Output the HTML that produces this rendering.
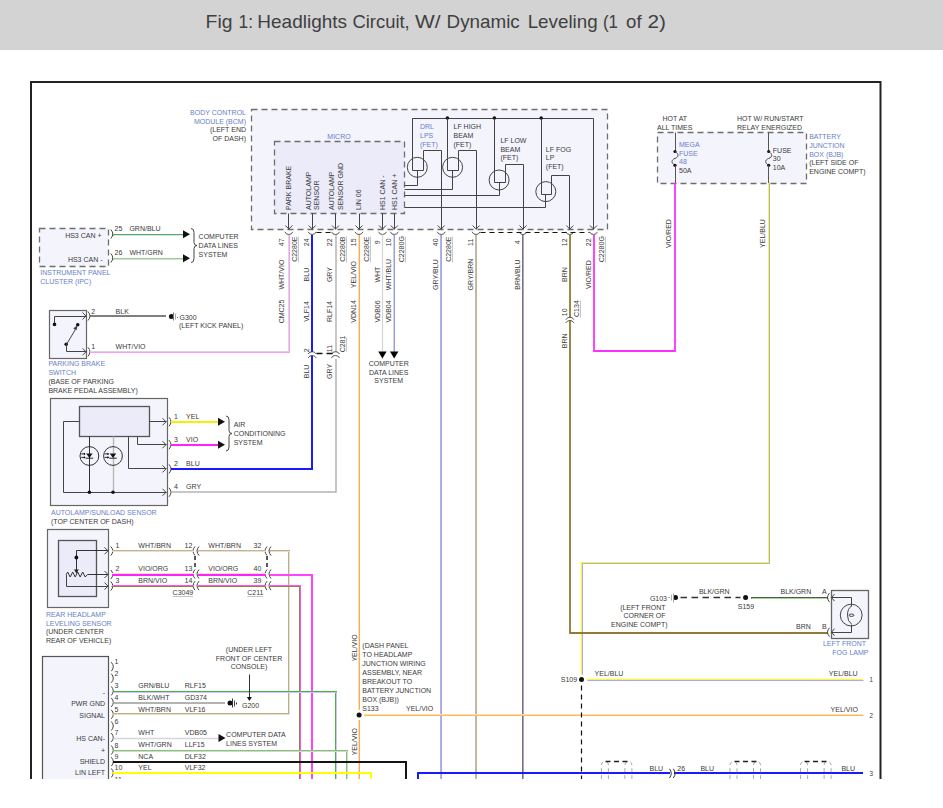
<!DOCTYPE html>
<html><head><meta charset="utf-8"><style>
html,body{margin:0;padding:0;background:#fff;}
svg{display:block;}
text{font-family:"Liberation Sans",sans-serif;}
</style></head><body>
<svg width="943" height="808" viewBox="0 0 943 808">
<rect x="0" y="0" width="943" height="808" fill="#ffffff"/>
<rect x="251.5" y="109.5" width="356.0" height="120.0" fill="#f4f4fd" stroke="#6e6e6e" stroke-width="1.3" stroke-dasharray="6,4"/>
<rect x="274.5" y="141.5" width="130.0" height="72.0" fill="#ebebf9" stroke="#6e6e6e" stroke-width="1.3" stroke-dasharray="6,4"/>
<text x="246" y="115.0" text-anchor="end" fill="#6a80c8" font-size="7">BODY CONTROL</text>
<text x="246" y="123.7" text-anchor="end" fill="#6a80c8" font-size="7">MODULE (BCM)</text>
<text x="246" y="132.4" text-anchor="end" fill="#3a3a3a" font-size="7">(LEFT END </text>
<text x="246" y="141.1" text-anchor="end" fill="#3a3a3a" font-size="7">OF DASH)</text>
<text x="339" y="138.5" text-anchor="middle" fill="#6a80c8" font-size="7">MICRO</text>
<text transform="translate(290.5,210) rotate(-90)" text-anchor="start" fill="#3a3a3a" font-size="7">PARK BRAKE</text>
<text transform="translate(310.5,210) rotate(-90)" text-anchor="start" fill="#3a3a3a" font-size="7">AUTOLAMP</text>
<text transform="translate(318.5,210) rotate(-90)" text-anchor="start" fill="#3a3a3a" font-size="7">SENSOR</text>
<text transform="translate(333.5,210) rotate(-90)" text-anchor="start" fill="#3a3a3a" font-size="7">AUTOLAMP</text>
<text transform="translate(342.5,210) rotate(-90)" text-anchor="start" fill="#3a3a3a" font-size="7">SENSOR GND</text>
<text transform="translate(361,210) rotate(-90)" text-anchor="start" fill="#3a3a3a" font-size="7">LIN 06</text>
<text transform="translate(385,210) rotate(-90)" text-anchor="start" fill="#3a3a3a" font-size="7">HS1 CAN -</text>
<text transform="translate(397,210) rotate(-90)" text-anchor="start" fill="#3a3a3a" font-size="7">HS1 CAN +</text>
<line x1="288.5" y1="213.5" x2="288.5" y2="229.5" stroke="#444" stroke-width="1"/>
<path d="M285.3,225.5 L288.8,229 L292.3,225.5" fill="none" stroke="#444" stroke-width="1"/>
<line x1="312.5" y1="213.5" x2="312.5" y2="229.5" stroke="#444" stroke-width="1"/>
<path d="M308.7,225.5 L312.2,229 L315.7,225.5" fill="none" stroke="#444" stroke-width="1"/>
<line x1="335.5" y1="213.5" x2="335.5" y2="229.5" stroke="#444" stroke-width="1"/>
<path d="M332.0,225.5 L335.5,229 L339.0,225.5" fill="none" stroke="#444" stroke-width="1"/>
<line x1="359.5" y1="213.5" x2="359.5" y2="229.5" stroke="#444" stroke-width="1"/>
<path d="M355.5,225.5 L359,229 L362.5,225.5" fill="none" stroke="#444" stroke-width="1"/>
<line x1="382.5" y1="213.5" x2="382.5" y2="229.5" stroke="#444" stroke-width="1"/>
<path d="M379.0,225.5 L382.5,229 L386.0,225.5" fill="none" stroke="#444" stroke-width="1"/>
<line x1="394.5" y1="213.5" x2="394.5" y2="229.5" stroke="#444" stroke-width="1"/>
<path d="M390.8,225.5 L394.3,229 L397.8,225.5" fill="none" stroke="#444" stroke-width="1"/>
<polyline points="412.5,167.5 412.5,118.5 593.5,118.5 593.5,229.5" fill="none" stroke="#444" stroke-width="1"/>
<path d="M590.0,225.5 L593.5,229 L597.0,225.5" fill="none" stroke="#444" stroke-width="1"/>
<circle cx="447.4" cy="118" r="1.8" fill="#111"/>
<circle cx="494.4" cy="118" r="1.8" fill="#111"/>
<circle cx="541.2" cy="118" r="1.8" fill="#111"/>
<circle cx="417.3" cy="167.3" r="10" fill="none" stroke="#444" stroke-width="1"/>
<line x1="412.5" y1="118.5" x2="412.5" y2="170.5" stroke="#444" stroke-width="1"/>
<line x1="412.5" y1="170.5" x2="423.5" y2="170.5" stroke="#444" stroke-width="1"/>
<polyline points="423.5,170.5 423.5,150.5 441.5,150.5 441.5,229.5" fill="none" stroke="#444" stroke-width="1"/>
<path d="M437.7,225.5 L441.2,229 L444.7,225.5" fill="none" stroke="#444" stroke-width="1"/>
<polyline points="417.5,170.5 417.5,185.5 404.5,185.5" fill="none" stroke="#444" stroke-width="1"/>
<circle cx="452.6" cy="167.3" r="10" fill="none" stroke="#444" stroke-width="1"/>
<line x1="447.5" y1="118.5" x2="447.5" y2="170.5" stroke="#444" stroke-width="1"/>
<line x1="447.5" y1="170.5" x2="458.5" y2="170.5" stroke="#444" stroke-width="1"/>
<polyline points="458.5,170.5 458.5,150.5 476.5,150.5 476.5,229.5" fill="none" stroke="#444" stroke-width="1"/>
<path d="M472.6,225.5 L476.1,229 L479.6,225.5" fill="none" stroke="#444" stroke-width="1"/>
<polyline points="452.5,170.5 452.5,189.5 404.5,189.5" fill="none" stroke="#444" stroke-width="1"/>
<circle cx="499.1" cy="180" r="10" fill="none" stroke="#444" stroke-width="1"/>
<line x1="494.5" y1="118.5" x2="494.5" y2="182.5" stroke="#444" stroke-width="1"/>
<line x1="494.5" y1="182.5" x2="505.5" y2="182.5" stroke="#444" stroke-width="1"/>
<polyline points="505.5,182.5 505.5,164.5 523.5,164.5 523.5,229.5" fill="none" stroke="#444" stroke-width="1"/>
<path d="M519.5,225.5 L523,229 L526.5,225.5" fill="none" stroke="#444" stroke-width="1"/>
<polyline points="499.5,182.5 499.5,195.5 404.5,195.5" fill="none" stroke="#444" stroke-width="1"/>
<circle cx="545.8" cy="191.6" r="10" fill="none" stroke="#444" stroke-width="1"/>
<line x1="541.5" y1="118.5" x2="541.5" y2="194.5" stroke="#444" stroke-width="1"/>
<line x1="541.5" y1="194.5" x2="551.5" y2="194.5" stroke="#444" stroke-width="1"/>
<polyline points="551.5,194.5 551.5,175.5 569.5,175.5 569.5,229.5" fill="none" stroke="#444" stroke-width="1"/>
<path d="M566.3,225.5 L569.8,229 L573.3,225.5" fill="none" stroke="#444" stroke-width="1"/>
<polyline points="545.5,194.5 545.5,207.5 404.5,207.5" fill="none" stroke="#444" stroke-width="1"/>
<text x="420" y="128.8" fill="#6a80c8" font-size="7">DRL</text>
<text x="420" y="137.9" fill="#6a80c8" font-size="7">LPS</text>
<text x="420" y="147.0" fill="#6a80c8" font-size="7">(FET)</text>
<text x="453.5" y="128.8" fill="#3a3a3a" font-size="7">LF HIGH</text>
<text x="453.5" y="137.9" fill="#3a3a3a" font-size="7">BEAM</text>
<text x="453.5" y="147.0" fill="#3a3a3a" font-size="7">(FET)</text>
<text x="500.4" y="142.8" fill="#3a3a3a" font-size="7">LF LOW</text>
<text x="500.4" y="151.5" fill="#3a3a3a" font-size="7">BEAM</text>
<text x="500.4" y="160.20000000000002" fill="#3a3a3a" font-size="7">(FET)</text>
<text x="545.8" y="151.8" fill="#3a3a3a" font-size="7">LF FOG</text>
<text x="545.8" y="160.20000000000002" fill="#3a3a3a" font-size="7">LP</text>
<text x="545.8" y="168.60000000000002" fill="#3a3a3a" font-size="7">(FET)</text>
<path d="M284.8,231.8 A4.3,4.3 0 0 0 292.8,231.8" fill="none" stroke="#555" stroke-width="1"/>
<path d="M308.2,231.8 A4.3,4.3 0 0 0 316.2,231.8" fill="none" stroke="#555" stroke-width="1"/>
<path d="M331.5,231.8 A4.3,4.3 0 0 0 339.5,231.8" fill="none" stroke="#555" stroke-width="1"/>
<path d="M355,231.8 A4.3,4.3 0 0 0 363,231.8" fill="none" stroke="#555" stroke-width="1"/>
<path d="M378.5,231.8 A4.3,4.3 0 0 0 386.5,231.8" fill="none" stroke="#555" stroke-width="1"/>
<path d="M390.3,231.8 A4.3,4.3 0 0 0 398.3,231.8" fill="none" stroke="#555" stroke-width="1"/>
<path d="M437.2,231.8 A4.3,4.3 0 0 0 445.2,231.8" fill="none" stroke="#555" stroke-width="1"/>
<path d="M472.1,231.8 A4.3,4.3 0 0 0 480.1,231.8" fill="none" stroke="#555" stroke-width="1"/>
<path d="M519,231.8 A4.3,4.3 0 0 0 527,231.8" fill="none" stroke="#555" stroke-width="1"/>
<path d="M565.8,231.8 A4.3,4.3 0 0 0 573.8,231.8" fill="none" stroke="#555" stroke-width="1"/>
<path d="M589.5,231.8 A4.3,4.3 0 0 0 597.5,231.8" fill="none" stroke="#555" stroke-width="1"/>
<line x1="316.5" y1="232.5" x2="331.5" y2="232.5" stroke="#111" stroke-width="1.2" stroke-dasharray="5,4"/>
<line x1="480.5" y1="232.5" x2="589.5" y2="232.5" stroke="#111" stroke-width="1.2" stroke-dasharray="5,4"/>
<rect x="657.5" y="132.5" width="149.0" height="51.0" fill="#f4f4fd" stroke="#6e6e6e" stroke-width="1.3" stroke-dasharray="6,4"/>
<text x="662.5" y="121" fill="#3a3a3a" font-size="7">HOT AT</text>
<text x="657" y="130" fill="#3a3a3a" font-size="7">ALL TIMES</text>
<text x="737" y="121" fill="#3a3a3a" font-size="7">HOT W/ RUN/START</text>
<text x="737" y="130" fill="#3a3a3a" font-size="7">RELAY ENERGIZED</text>
<text x="679" y="147.0" fill="#6a80c8" font-size="7">MEGA</text>
<text x="679" y="155.6" fill="#6a80c8" font-size="7">FUSE</text>
<text x="679" y="164.2" fill="#6a80c8" font-size="7">48</text>
<text x="679" y="172.8" fill="#3a3a3a" font-size="7">50A</text>
<text x="772.8" y="152.6" fill="#3a3a3a" font-size="7">FUSE</text>
<text x="772.8" y="161.29999999999998" fill="#3a3a3a" font-size="7">30</text>
<text x="772.8" y="170.0" fill="#3a3a3a" font-size="7">10A</text>
<text x="809.2" y="139.4" fill="#6a80c8" font-size="7">BATTERY</text>
<text x="809.2" y="148.0" fill="#6a80c8" font-size="7">JUNCTION</text>
<text x="809.2" y="156.6" fill="#6a80c8" font-size="7">BOX (BJB)</text>
<text x="809.2" y="165.2" fill="#3a3a3a" font-size="7">(LEFT SIDE OF</text>
<text x="809.2" y="173.8" fill="#3a3a3a" font-size="7">ENGINE COMPT)</text>
<line x1="675.5" y1="132.5" x2="675.5" y2="151.5" stroke="#555" stroke-width="1"/>
<circle cx="675" cy="151.5" r="1.6" fill="#111"/>
<path d="M675,151.5 C679,154 679,157 675,158.4 C671,160 671,163 675,165.3" fill="none" stroke="#444" stroke-width="1"/>
<circle cx="675" cy="165.3" r="1.6" fill="#111"/>
<line x1="675.5" y1="165.5" x2="675.5" y2="183.5" stroke="#555" stroke-width="1"/>
<line x1="768.5" y1="132.5" x2="768.5" y2="151.5" stroke="#555" stroke-width="1"/>
<circle cx="768.7" cy="151.5" r="1.6" fill="#111"/>
<path d="M768.7,151.5 C772.7,154 772.7,157 768.7,158.4 C764.7,160 764.7,163 768.7,165.3" fill="none" stroke="#444" stroke-width="1"/>
<circle cx="768.7" cy="165.3" r="1.6" fill="#111"/>
<line x1="768.5" y1="165.5" x2="768.5" y2="183.5" stroke="#555" stroke-width="1"/>
<polyline points="594.0,235.0 594.0,351.0 675.0,351.0 675.0,183.0" fill="none" stroke="#ff30ff" stroke-width="1.8"/>
<text transform="translate(671,233.5) rotate(-90)" text-anchor="middle" fill="#3a3a3a" font-size="7">VIO/RED</text>
<polyline points="769.0,183.0 769.0,563.0 582.0,563.0 582.0,679.0" fill="none" stroke="#ffff00" stroke-width="2"/>
<polyline points="769.5,183.5 769.5,563.5 582.5,563.5 582.5,679.5" fill="none" stroke="#a8a8ff" stroke-width="1"/>
<text transform="translate(765,233.5) rotate(-90)" text-anchor="middle" fill="#3a3a3a" font-size="7">YEL/BLU</text>
<rect x="39.5" y="228.5" width="69.0" height="38.0" fill="#f4f4fd" stroke="#6e6e6e" stroke-width="1.3" stroke-dasharray="6,4"/>
<text x="101.5" y="238" text-anchor="end" fill="#3a3a3a" font-size="7">HS3 CAN +</text>
<text x="102.5" y="262" text-anchor="end" fill="#3a3a3a" font-size="7">HS3 CAN -</text>
<text x="40.3" y="275.0" fill="#6a80c8" font-size="7">INSTRUMENT PANEL</text>
<text x="40.3" y="284.3" fill="#6a80c8" font-size="7">CLUSTER (IPC)</text>
<path d="M110.8,229.5 Q114.8,234 110.8,238.5" fill="none" stroke="#444" stroke-width="1"/>
<path d="M110.8,253.5 Q114.8,258 110.8,262.5" fill="none" stroke="#444" stroke-width="1"/>
<polyline points="113.0,235.0 183.0,235.0" fill="none" stroke="#4cae4c" stroke-width="2"/>
<polyline points="113.5,235.5 183.5,235.5" fill="none" stroke="#dcdcf8" stroke-width="1"/>
<path d="M183,230.2 L190,234.2 L183,238.2 Z" fill="#111"/>
<polyline points="113.0,259.0 183.0,259.0" fill="none" stroke="#98d488" stroke-width="2"/>
<polyline points="113.5,259.5 183.5,259.5" fill="none" stroke="#dadada" stroke-width="1"/>
<path d="M183,254.2 L190,258.2 L183,262.2 Z" fill="#111"/>
<text x="114.5" y="231" fill="#3a3a3a" font-size="7">25</text>
<text x="129.4" y="231" fill="#3a3a3a" font-size="7">GRN/BLU</text>
<text x="114.5" y="255" fill="#3a3a3a" font-size="7">26</text>
<text x="129.4" y="255" fill="#3a3a3a" font-size="7">WHT/GRN</text>
<path d="M191,228.5 Q194,228.5 194,232.5 L194,242.5 Q194,245.5 197,245.5 Q194,245.5 194,248.5 L194,258.5 Q194,262.5 191,262.5" fill="none" stroke="#444" stroke-width="1"/>
<text x="198.6" y="239" fill="#3a3a3a" font-size="7">COMPUTER</text>
<text x="198.6" y="248" fill="#3a3a3a" font-size="7">DATA LINES</text>
<text x="198.6" y="257" fill="#3a3a3a" font-size="7">SYSTEM</text>
<rect x="49.5" y="310.5" width="37.0" height="48.0" fill="#f4f4fd" stroke="#666" stroke-width="1.2"/>
<polyline points="54.5,324.5 54.5,316.5 86.5,316.5" fill="none" stroke="#444" stroke-width="1"/>
<path d="M82.5,312.5 L86,316 L82.5,319.5" fill="none" stroke="#444" stroke-width="1"/>
<circle cx="54.5" cy="324.4" r="1.8" fill="#111"/>
<circle cx="77.7" cy="324.7" r="1.8" fill="#111"/>
<circle cx="66.2" cy="344.2" r="1.8" fill="#111"/>
<line x1="66.5" y1="344.5" x2="76.5" y2="327.5" stroke="#444" stroke-width="1"/>
<path d="M77.5,325 L73.2,328.4 L76.6,330.3 Z" fill="#444"/>
<polyline points="66.5,344.5 66.5,351.5 86.5,351.5" fill="none" stroke="#444" stroke-width="1"/>
<path d="M82.5,348.3 L86,351.8 L82.5,355.3" fill="none" stroke="#444" stroke-width="1"/>
<path d="M88,311.5 Q92,316 88,320.5" fill="none" stroke="#444" stroke-width="1"/>
<path d="M88,347.3 Q92,351.8 88,356.3" fill="none" stroke="#444" stroke-width="1"/>
<line x1="90.0" y1="316.0" x2="166.0" y2="316.0" stroke="#555555" stroke-width="1.5"/>
<circle cx="171.4" cy="316.4" r="2.5" fill="#111"/>
<line x1="173.5" y1="312.5" x2="173.5" y2="320.5" stroke="#777" stroke-width="1"/>
<line x1="175.5" y1="313.5" x2="175.5" y2="319.5" stroke="#999" stroke-width="0.8"/>
<circle cx="177.5" cy="317.5" r="0.6" fill="#555"/>
<text x="91.2" y="313.5" fill="#3a3a3a" font-size="7">2</text>
<text x="115.6" y="313.5" fill="#3a3a3a" font-size="7">BLK</text>
<text x="179.5" y="319.5" fill="#3a3a3a" font-size="7">G300</text>
<text x="179" y="328.2" fill="#3a3a3a" font-size="7">(LEFT KICK PANEL)</text>
<text x="91.2" y="348.5" fill="#3a3a3a" font-size="7">1</text>
<text x="115.6" y="348.5" fill="#3a3a3a" font-size="7">WHT/VIO</text>
<polyline points="90.0,352.0 289.0,352.0 289.0,235.0" fill="none" stroke="#d8d8d8" stroke-width="2"/>
<polyline points="90.5,352.5 289.5,352.5 289.5,235.5" fill="none" stroke="#ff99ff" stroke-width="1"/>
<text x="48.4" y="365.6" fill="#6a80c8" font-size="7">PARKING BRAKE</text>
<text x="48.4" y="374.70000000000005" fill="#6a80c8" font-size="7">SWITCH</text>
<text x="48.4" y="383.8" fill="#3a3a3a" font-size="7">(BASE OF PARKING</text>
<text x="48.4" y="392.90000000000003" fill="#3a3a3a" font-size="7">BRAKE PEDAL ASSEMBLY)</text>
<line x1="312.0" y1="235.0" x2="312.0" y2="352.0" stroke="#1a1aff" stroke-width="2"/>
<line x1="336.0" y1="235.0" x2="336.0" y2="352.0" stroke="#b4b4b4" stroke-width="1.5"/>
<polyline points="359.0,235.0 359.0,779.0" fill="none" stroke="#ffff00" stroke-width="2"/>
<polyline points="359.5,235.0 359.5,779.0" fill="none" stroke="#ff88ff" stroke-width="1"/>
<line x1="382.5" y1="234.5" x2="382.5" y2="351.5" stroke="#d4d4d4" stroke-width="1.2"/>
<path d="M378.2,351.5 L382.4,358.5 L386.59999999999997,351.5 Z" fill="#000"/>
<polyline points="394.0,235.0 394.0,352.0" fill="none" stroke="#d0d0d0" stroke-width="2"/>
<polyline points="394.5,235.0 394.5,352.0" fill="none" stroke="#9a9aff" stroke-width="1"/>
<path d="M390.0,351.5 L394.2,358.5 L398.4,351.5 Z" fill="#000"/>
<polyline points="441.0,235.0 441.0,779.0" fill="none" stroke="#b8b8c8" stroke-width="2"/>
<polyline points="441.5,235.0 441.5,779.0" fill="none" stroke="#a0a0ff" stroke-width="1"/>
<polyline points="476.0,235.0 476.0,779.0" fill="none" stroke="#bcbcbc" stroke-width="2"/>
<polyline points="476.5,235.0 476.5,779.0" fill="none" stroke="#c8b48c" stroke-width="1"/>
<polyline points="523.0,235.0 523.0,779.0" fill="none" stroke="#8a7440" stroke-width="2"/>
<polyline points="523.5,235.0 523.5,779.0" fill="none" stroke="#a0a0ff" stroke-width="1"/>
<line x1="570.0" y1="235.0" x2="570.0" y2="317.0" stroke="#917a35" stroke-width="1.8"/>
<polyline points="570.0,321.0 570.0,633.0 828.0,633.0" fill="none" stroke="#917a35" stroke-width="1.8"/>
<text x="388.7" y="366.2" text-anchor="middle" fill="#3a3a3a" font-size="7">COMPUTER</text>
<text x="388.7" y="374.59999999999997" text-anchor="middle" fill="#3a3a3a" font-size="7">DATA LINES</text>
<text x="388.7" y="383.0" text-anchor="middle" fill="#3a3a3a" font-size="7">SYSTEM</text>
<text transform="translate(284.3,242.3) rotate(-90)" text-anchor="middle" fill="#3a3a3a" font-size="7">47</text>
<text transform="translate(284.3,274.6) rotate(-90)" text-anchor="middle" fill="#3a3a3a" font-size="7">WHT/VIO</text>
<text transform="translate(284.3,311.5) rotate(-90)" text-anchor="middle" fill="#3a3a3a" font-size="7">CMC25</text>
<text transform="translate(297.3,249.2) rotate(-90)" text-anchor="middle" fill="#3a3a3a" font-size="7">C2280E</text>
<line x1="298.5" y1="236.5" x2="298.5" y2="262.5" stroke="#b0b0b0" stroke-width="0.7"/>
<text transform="translate(308.5,242.3) rotate(-90)" text-anchor="middle" fill="#3a3a3a" font-size="7">24</text>
<text transform="translate(308.5,274.6) rotate(-90)" text-anchor="middle" fill="#3a3a3a" font-size="7">BLU</text>
<text transform="translate(308.5,311.5) rotate(-90)" text-anchor="middle" fill="#3a3a3a" font-size="7">VLF14</text>
<text transform="translate(331.9,242.3) rotate(-90)" text-anchor="middle" fill="#3a3a3a" font-size="7">22</text>
<text transform="translate(331.9,274.6) rotate(-90)" text-anchor="middle" fill="#3a3a3a" font-size="7">GRY</text>
<text transform="translate(331.9,311.5) rotate(-90)" text-anchor="middle" fill="#3a3a3a" font-size="7">RLF14</text>
<text transform="translate(344.9,249.2) rotate(-90)" text-anchor="middle" fill="#3a3a3a" font-size="7">C2280B</text>
<line x1="346.5" y1="236.5" x2="346.5" y2="262.5" stroke="#b0b0b0" stroke-width="0.7"/>
<text transform="translate(356.3,242.3) rotate(-90)" text-anchor="middle" fill="#3a3a3a" font-size="7">15</text>
<text transform="translate(356.3,274.6) rotate(-90)" text-anchor="middle" fill="#3a3a3a" font-size="7">YEL/VIO</text>
<text transform="translate(356.3,311.5) rotate(-90)" text-anchor="middle" fill="#3a3a3a" font-size="7">VDN14</text>
<text transform="translate(369.3,249.2) rotate(-90)" text-anchor="middle" fill="#3a3a3a" font-size="7">C2280E</text>
<line x1="370.5" y1="236.5" x2="370.5" y2="262.5" stroke="#b0b0b0" stroke-width="0.7"/>
<text transform="translate(379.8,242.3) rotate(-90)" text-anchor="middle" fill="#3a3a3a" font-size="7">9</text>
<text transform="translate(379.8,274.6) rotate(-90)" text-anchor="middle" fill="#3a3a3a" font-size="7">WHT</text>
<text transform="translate(379.8,311.5) rotate(-90)" text-anchor="middle" fill="#3a3a3a" font-size="7">VDB06</text>
<text transform="translate(391.2,242.3) rotate(-90)" text-anchor="middle" fill="#3a3a3a" font-size="7">10</text>
<text transform="translate(391.2,274.6) rotate(-90)" text-anchor="middle" fill="#3a3a3a" font-size="7">WHT/BLU</text>
<text transform="translate(391.2,311.5) rotate(-90)" text-anchor="middle" fill="#3a3a3a" font-size="7">VDB04</text>
<text transform="translate(404.2,249.2) rotate(-90)" text-anchor="middle" fill="#3a3a3a" font-size="7">C2280G</text>
<line x1="405.5" y1="236.5" x2="405.5" y2="262.5" stroke="#b0b0b0" stroke-width="0.7"/>
<text transform="translate(438.3,242.3) rotate(-90)" text-anchor="middle" fill="#3a3a3a" font-size="7">40</text>
<text transform="translate(438.3,274.6) rotate(-90)" text-anchor="middle" fill="#3a3a3a" font-size="7">GRY/BLU</text>
<text transform="translate(451.3,249.2) rotate(-90)" text-anchor="middle" fill="#3a3a3a" font-size="7">C2280E</text>
<line x1="452.5" y1="236.5" x2="452.5" y2="262.5" stroke="#b0b0b0" stroke-width="0.7"/>
<text transform="translate(472.7,242.3) rotate(-90)" text-anchor="middle" fill="#3a3a3a" font-size="7">11</text>
<text transform="translate(472.7,274.6) rotate(-90)" text-anchor="middle" fill="#3a3a3a" font-size="7">GRY/BRN</text>
<text transform="translate(520.2,242.3) rotate(-90)" text-anchor="middle" fill="#3a3a3a" font-size="7">4</text>
<text transform="translate(520.2,274.6) rotate(-90)" text-anchor="middle" fill="#3a3a3a" font-size="7">BRN/BLU</text>
<text transform="translate(566.5,242.3) rotate(-90)" text-anchor="middle" fill="#3a3a3a" font-size="7">12</text>
<text transform="translate(566.5,274.6) rotate(-90)" text-anchor="middle" fill="#3a3a3a" font-size="7">BRN</text>
<text transform="translate(590.7,242.3) rotate(-90)" text-anchor="middle" fill="#3a3a3a" font-size="7">22</text>
<text transform="translate(590.7,274.6) rotate(-90)" text-anchor="middle" fill="#3a3a3a" font-size="7">VIO/RED</text>
<text transform="translate(603.7,249.2) rotate(-90)" text-anchor="middle" fill="#3a3a3a" font-size="7">C2280G</text>
<line x1="605.5" y1="236.5" x2="605.5" y2="262.5" stroke="#b0b0b0" stroke-width="0.7"/>
<path d="M308.2,354.0 A4.7,4.7 0 0 1 316.2,354.0" fill="none" stroke="#444" stroke-width="1"/>
<path d="M308.2,357.8 A4.7,4.7 0 0 1 316.2,357.8" fill="none" stroke="#444" stroke-width="1"/>
<path d="M331.5,354.0 A4.7,4.7 0 0 1 339.5,354.0" fill="none" stroke="#444" stroke-width="1"/>
<path d="M331.5,357.8 A4.7,4.7 0 0 1 339.5,357.8" fill="none" stroke="#444" stroke-width="1"/>
<line x1="312.0" y1="356.0" x2="312.0" y2="360.0" stroke="#1a1aff" stroke-width="2"/>
<line x1="316.5" y1="353.5" x2="332.5" y2="353.5" stroke="#111" stroke-width="1.3" stroke-dasharray="6,4"/>
<text transform="translate(345,344) rotate(-90)" text-anchor="middle" fill="#3a3a3a" font-size="7">C281</text>
<line x1="346.5" y1="337.5" x2="346.5" y2="351.5" stroke="#b0b0b0" stroke-width="0.7"/>
<text transform="translate(309.3,350.4) rotate(-90)" text-anchor="middle" fill="#3a3a3a" font-size="7">2</text>
<text transform="translate(332,348.5) rotate(-90)" text-anchor="middle" fill="#3a3a3a" font-size="7">11</text>
<text transform="translate(309.3,371.4) rotate(-90)" text-anchor="middle" fill="#3a3a3a" font-size="7">BLU</text>
<text transform="translate(332,371.4) rotate(-90)" text-anchor="middle" fill="#3a3a3a" font-size="7">GRY</text>
<path d="M565.9,319.6 A4.7,4.7 0 0 1 573.9,319.6" fill="none" stroke="#444" stroke-width="1"/>
<path d="M565.9,322.8 A4.7,4.7 0 0 1 573.9,322.8" fill="none" stroke="#444" stroke-width="1"/>
<text transform="translate(566.9,312.3) rotate(-90)" text-anchor="middle" fill="#3a3a3a" font-size="7">10</text>
<text transform="translate(579,308.6) rotate(-90)" text-anchor="middle" fill="#3a3a3a" font-size="7">C134</text>
<line x1="580.5" y1="300.5" x2="580.5" y2="317.5" stroke="#b0b0b0" stroke-width="0.7"/>
<text transform="translate(566.9,340.8) rotate(-90)" text-anchor="middle" fill="#3a3a3a" font-size="7">BRN</text>
<rect x="50.5" y="398.5" width="117.0" height="107.0" fill="#f4f4fd" stroke="#666" stroke-width="1.2"/>
<rect x="79.5" y="406.5" width="70.0" height="30.0" fill="#ebebf9" stroke="#555" stroke-width="1.3"/>
<polyline points="149.5,421.5 166.5,421.5" fill="none" stroke="#444" stroke-width="1"/>
<path d="M162.5,418.3 L166,421.8 L162.5,425.3" fill="none" stroke="#444" stroke-width="1"/>
<polyline points="137.5,436.5 137.5,444.5 166.5,444.5" fill="none" stroke="#444" stroke-width="1"/>
<path d="M162.5,441.2 L166,444.7 L162.5,448.2" fill="none" stroke="#444" stroke-width="1"/>
<polyline points="128.5,436.5 128.5,468.5 166.5,468.5" fill="none" stroke="#444" stroke-width="1"/>
<path d="M162.5,465.4 L166,468.9 L162.5,472.4" fill="none" stroke="#444" stroke-width="1"/>
<polyline points="79.5,421.5 63.5,421.5 63.5,492.5 166.5,492.5" fill="none" stroke="#444" stroke-width="1"/>
<path d="M162.5,488.8 L166,492.3 L162.5,495.8" fill="none" stroke="#444" stroke-width="1"/>
<line x1="89.5" y1="436.5" x2="89.5" y2="492.5" stroke="#333" stroke-width="1"/>
<circle cx="89.4" cy="456" r="9.4" fill="none" stroke="#333" stroke-width="1"/>
<circle cx="89.4" cy="492.3" r="1.8" fill="#111"/>
<path d="M86.2,453.6 L92.60000000000001,453.6 L89.4,458 Z" fill="#111"/>
<line x1="85.60000000000001" y1="458.2" x2="93.2" y2="458.2" stroke="#111" stroke-width="0.9"/>
<line x1="81.2" y1="453.9" x2="84.9" y2="453.9" stroke="#111" stroke-width="0.9"/>
<path d="M83.9,452.59999999999997 L85.60000000000001,453.9 L83.9,455.2 Z" fill="#111"/>
<line x1="81.2" y1="457.4" x2="84.9" y2="457.4" stroke="#111" stroke-width="0.9"/>
<path d="M83.9,456.09999999999997 L85.60000000000001,457.4 L83.9,458.7 Z" fill="#111"/>
<line x1="113.5" y1="436.5" x2="113.5" y2="492.5" stroke="#b8b8b8" stroke-width="1.4"/>
<circle cx="113" cy="456" r="9.4" fill="none" stroke="#333" stroke-width="1"/>
<circle cx="113" cy="492.3" r="1.8" fill="#111"/>
<path d="M109.8,453.6 L116.2,453.6 L113,458 Z" fill="#111"/>
<line x1="109.2" y1="458.2" x2="116.8" y2="458.2" stroke="#111" stroke-width="0.9"/>
<line x1="104.8" y1="453.9" x2="108.5" y2="453.9" stroke="#111" stroke-width="0.9"/>
<path d="M107.5,452.59999999999997 L109.2,453.9 L107.5,455.2 Z" fill="#111"/>
<line x1="104.8" y1="457.4" x2="108.5" y2="457.4" stroke="#111" stroke-width="0.9"/>
<path d="M107.5,456.09999999999997 L109.2,457.4 L107.5,458.7 Z" fill="#111"/>
<path d="M169,417.3 Q173,421.8 169,426.3" fill="none" stroke="#444" stroke-width="1"/>
<path d="M169,440.2 Q173,444.7 169,449.2" fill="none" stroke="#444" stroke-width="1"/>
<path d="M169,464.4 Q173,468.9 169,473.4" fill="none" stroke="#444" stroke-width="1"/>
<path d="M169,487.8 Q173,492.3 169,496.8" fill="none" stroke="#444" stroke-width="1"/>
<line x1="171.0" y1="422.0" x2="218.0" y2="422.0" stroke="#f2f200" stroke-width="2"/>
<path d="M218,417.8 L225,421.8 L218,425.8 Z" fill="#111"/>
<line x1="171.0" y1="445.0" x2="218.0" y2="445.0" stroke="#ff22ff" stroke-width="2"/>
<path d="M218,440.7 L225,444.7 L218,448.7 Z" fill="#111"/>
<polyline points="171.0,469.0 312.0,469.0 312.0,359.0" fill="none" stroke="#1a1aff" stroke-width="2"/>
<polyline points="171.0,492.0 336.0,492.0 336.0,359.0" fill="none" stroke="#b4b4b4" stroke-width="1.5"/>
<text x="173.9" y="418.7" fill="#3a3a3a" font-size="7">1</text>
<text x="186.1" y="418.7" fill="#3a3a3a" font-size="7">YEL</text>
<text x="173.9" y="442" fill="#3a3a3a" font-size="7">3</text>
<text x="186.1" y="442" fill="#3a3a3a" font-size="7">VIO</text>
<text x="173.9" y="466.3" fill="#3a3a3a" font-size="7">2</text>
<text x="186.1" y="466.3" fill="#3a3a3a" font-size="7">BLU</text>
<text x="173.9" y="489.2" fill="#3a3a3a" font-size="7">4</text>
<text x="186.1" y="489.2" fill="#3a3a3a" font-size="7">GRY</text>
<path d="M226,416 Q229,416 229,420 L229,430.5 Q229,433.5 232,433.5 Q229,433.5 229,436.5 L229,447 Q229,451 226,451" fill="none" stroke="#444" stroke-width="1"/>
<text x="233.7" y="427.0" fill="#3a3a3a" font-size="7">AIR</text>
<text x="233.7" y="435.9" fill="#3a3a3a" font-size="7">CONDITIONING</text>
<text x="233.7" y="444.8" fill="#3a3a3a" font-size="7">SYSTEM</text>
<text x="51" y="514.7" fill="#6a80c8" font-size="7">AUTOLAMP/SUNLOAD SENSOR</text>
<text x="51" y="524.1" fill="#3a3a3a" font-size="7">(TOP CENTER OF DASH)</text>
<rect x="47.5" y="529.5" width="61.0" height="78.0" fill="#f4f4fd" stroke="#666" stroke-width="1.2"/>
<rect x="58.5" y="540.5" width="38.0" height="56.0" fill="#ebebf9" stroke="#555" stroke-width="1.3"/>
<polyline points="76.5,570.5 76.5,550.5 108.5,550.5" fill="none" stroke="#333" stroke-width="1"/>
<path d="M104.5,547.3 L108,550.8 L104.5,554.3" fill="none" stroke="#444" stroke-width="1"/>
<circle cx="76.4" cy="557.5" r="1.9" fill="#111"/>
<path d="M74,569.5 L76.4,573.5 L78.8,569.5 Z" fill="#222"/>
<path d="M66.2,574.5 L67.7,572 L70.2,577 L72.7,572 L75.2,577 L77.7,572 L80.2,577 L82.7,572 L85.2,577 L87.5,574.5 L108,574.5" fill="none" stroke="#333" stroke-width="1"/>
<path d="M104.5,571.0 L108,574.5 L104.5,578.0" fill="none" stroke="#444" stroke-width="1"/>
<polyline points="66.5,574.5 66.5,586.5 108.5,586.5" fill="none" stroke="#444" stroke-width="1"/>
<path d="M104.5,582.6 L108,586.1 L104.5,589.6" fill="none" stroke="#444" stroke-width="1"/>
<path d="M110.8,546.5 Q114.8,551 110.8,555.5" fill="none" stroke="#444" stroke-width="1"/>
<path d="M110.8,570.0 Q114.8,574.5 110.8,579.0" fill="none" stroke="#444" stroke-width="1"/>
<path d="M110.8,581.5 Q114.8,586 110.8,590.5" fill="none" stroke="#444" stroke-width="1"/>
<text x="115.4" y="548" fill="#3a3a3a" font-size="7">1</text>
<text x="138.3" y="548" fill="#3a3a3a" font-size="7">WHT/BRN</text>
<text x="184.6" y="548" fill="#3a3a3a" font-size="7">12</text>
<text x="115.4" y="571" fill="#3a3a3a" font-size="7">2</text>
<text x="138.3" y="571" fill="#3a3a3a" font-size="7">VIO/ORG</text>
<text x="184.6" y="571" fill="#3a3a3a" font-size="7">13</text>
<text x="115.4" y="583" fill="#3a3a3a" font-size="7">3</text>
<text x="138.3" y="583" fill="#3a3a3a" font-size="7">BRN/VIO</text>
<text x="184.6" y="583" fill="#3a3a3a" font-size="7">14</text>
<text x="172.6" y="595" fill="#3a3a3a" font-size="7">C3049</text>
<line x1="172.6" y1="596.5" x2="193" y2="596.5" stroke="#aaa" stroke-width="0.7"/>
<text x="208.3" y="548" fill="#3a3a3a" font-size="7">WHT/BRN</text>
<text x="253.6" y="548" fill="#3a3a3a" font-size="7">32</text>
<text x="208.3" y="571" fill="#3a3a3a" font-size="7">VIO/ORG</text>
<text x="253.6" y="571" fill="#3a3a3a" font-size="7">40</text>
<text x="208.3" y="583" fill="#3a3a3a" font-size="7">BRN/VIO</text>
<text x="253.6" y="583" fill="#3a3a3a" font-size="7">39</text>
<text x="247.3" y="595" fill="#3a3a3a" font-size="7">C211</text>
<line x1="247.3" y1="596.5" x2="263" y2="596.5" stroke="#aaa" stroke-width="0.7"/>
<text x="45.9" y="617.2" fill="#6a80c8" font-size="7">REAR HEADLAMP</text>
<text x="45.9" y="625.7" fill="#6a80c8" font-size="7">LEVELING SENSOR</text>
<text x="45.9" y="634.2" fill="#3a3a3a" font-size="7">(UNDER CENTER</text>
<text x="45.9" y="642.7" fill="#3a3a3a" font-size="7">REAR OF VEHICLE)</text>
<path d="M195,546.5 Q191,551 195,555.5" fill="none" stroke="#444" stroke-width="1"/>
<path d="M199,546.5 Q195,551 199,555.5" fill="none" stroke="#444" stroke-width="1"/>
<path d="M195,569.5 Q191,574 195,578.5" fill="none" stroke="#444" stroke-width="1"/>
<path d="M199,569.5 Q195,574 199,578.5" fill="none" stroke="#444" stroke-width="1"/>
<path d="M195,581.2 Q191,585.7 195,590.2" fill="none" stroke="#444" stroke-width="1"/>
<path d="M199,581.2 Q195,585.7 199,590.2" fill="none" stroke="#444" stroke-width="1"/>
<line x1="195.0" y1="556.0" x2="195.0" y2="569.0" stroke="#222" stroke-width="1.5" stroke-dasharray="4,3"/>
<path d="M267,546.5 Q263,551 267,555.5" fill="none" stroke="#444" stroke-width="1"/>
<path d="M271,546.5 Q267,551 271,555.5" fill="none" stroke="#444" stroke-width="1"/>
<path d="M267,569.5 Q263,574 267,578.5" fill="none" stroke="#444" stroke-width="1"/>
<path d="M271,569.5 Q267,574 271,578.5" fill="none" stroke="#444" stroke-width="1"/>
<path d="M267,581.2 Q263,585.7 267,590.2" fill="none" stroke="#444" stroke-width="1"/>
<path d="M271,581.2 Q267,585.7 271,590.2" fill="none" stroke="#444" stroke-width="1"/>
<line x1="267.0" y1="556.0" x2="267.0" y2="569.0" stroke="#222" stroke-width="1.5" stroke-dasharray="4,3"/>
<polyline points="112.0,551.0 194.0,551.0" fill="none" stroke="#c8b48c" stroke-width="2"/>
<polyline points="112.5,551.5 194.5,551.5" fill="none" stroke="#e4e0d8" stroke-width="1"/>
<polyline points="198.0,551.0 266.0,551.0" fill="none" stroke="#c8b48c" stroke-width="2"/>
<polyline points="198.5,551.5 266.5,551.5" fill="none" stroke="#e4e0d8" stroke-width="1"/>
<polyline points="270.0,551.0 289.0,551.0 289.0,714.0" fill="none" stroke="#bcae84" stroke-width="2"/>
<polyline points="270.5,551.5 289.5,551.5 289.5,714.5" fill="none" stroke="#e4e0d8" stroke-width="1"/>
<polyline points="112.0,575.0 194.0,575.0" fill="none" stroke="#ff22ff" stroke-width="2"/>
<polyline points="112.0,573.5 194.0,573.5" fill="none" stroke="#ffe0c0" stroke-width="1"/>
<polyline points="198.0,575.0 266.0,575.0" fill="none" stroke="#ff22ff" stroke-width="2"/>
<polyline points="198.0,573.5 266.0,573.5" fill="none" stroke="#ffe0c0" stroke-width="1"/>
<polyline points="270.0,575.0 312.0,575.0 312.0,779.0" fill="none" stroke="#ff44ff" stroke-width="2"/>
<polyline points="112.0,586.0 194.0,586.0" fill="none" stroke="#ff55ff" stroke-width="2"/>
<polyline points="111.5,586.5 193.5,586.5" fill="none" stroke="#9a7a40" stroke-width="1"/>
<polyline points="198.0,586.0 266.0,586.0" fill="none" stroke="#ff55ff" stroke-width="2"/>
<polyline points="197.5,586.5 265.5,586.5" fill="none" stroke="#9a7a40" stroke-width="1"/>
<polyline points="270.0,586.0 300.0,586.0 300.0,779.0" fill="none" stroke="#ff55ff" stroke-width="2"/>
<polyline points="269.5,586.5 299.5,586.5 299.5,779.5" fill="none" stroke="#9a7a50" stroke-width="1"/>
<rect x="42.5" y="656.5" width="66.0" height="140.0" fill="#f4f4fd" stroke="#555" stroke-width="1.2"/>
<path d="M111.3,662.2 Q115.3,666.7 111.3,671.2" fill="none" stroke="#444" stroke-width="1"/>
<text x="114.6" y="664.2" fill="#3a3a3a" font-size="7">1</text>
<path d="M111.3,673.7 Q115.3,678.2 111.3,682.7" fill="none" stroke="#444" stroke-width="1"/>
<text x="114.6" y="675.7" fill="#3a3a3a" font-size="7">2</text>
<path d="M111.3,686.4 Q115.3,690.9 111.3,695.4" fill="none" stroke="#444" stroke-width="1"/>
<text x="114.6" y="688.4" fill="#3a3a3a" font-size="7">3</text>
<path d="M111.3,697.9 Q115.3,702.4 111.3,706.9" fill="none" stroke="#444" stroke-width="1"/>
<text x="114.6" y="699.9" fill="#3a3a3a" font-size="7">4</text>
<path d="M111.3,709.8 Q115.3,714.3 111.3,718.8" fill="none" stroke="#444" stroke-width="1"/>
<text x="114.6" y="711.8" fill="#3a3a3a" font-size="7">5</text>
<path d="M111.3,721.5 Q115.3,726 111.3,730.5" fill="none" stroke="#444" stroke-width="1"/>
<text x="114.6" y="723.5" fill="#3a3a3a" font-size="7">6</text>
<path d="M111.3,733.0 Q115.3,737.5 111.3,742.0" fill="none" stroke="#444" stroke-width="1"/>
<text x="114.6" y="735.0" fill="#3a3a3a" font-size="7">7</text>
<path d="M111.3,745.5 Q115.3,750 111.3,754.5" fill="none" stroke="#444" stroke-width="1"/>
<text x="114.6" y="747.5" fill="#3a3a3a" font-size="7">8</text>
<path d="M111.3,757.2 Q115.3,761.7 111.3,766.2" fill="none" stroke="#444" stroke-width="1"/>
<text x="114.6" y="759.2" fill="#3a3a3a" font-size="7">9</text>
<path d="M111.3,768.4 Q115.3,772.9 111.3,777.4" fill="none" stroke="#444" stroke-width="1"/>
<text x="114.6" y="770.4" fill="#3a3a3a" font-size="7">10</text>
<path d="M111.3,780.0 Q115.3,784.5 111.3,789.0" fill="none" stroke="#444" stroke-width="1"/>
<text x="114.6" y="782.0" fill="#3a3a3a" font-size="7">11</text>
<text x="105" y="694.5" text-anchor="end" fill="#3a3a3a" font-size="7">-</text>
<text x="105" y="706" text-anchor="end" fill="#3a3a3a" font-size="7">PWR GND</text>
<text x="105" y="717.8" text-anchor="end" fill="#3a3a3a" font-size="7">SIGNAL</text>
<text x="105" y="741" text-anchor="end" fill="#3a3a3a" font-size="7">HS CAN-</text>
<text x="105" y="752.7" text-anchor="end" fill="#3a3a3a" font-size="7">+</text>
<text x="105" y="764.2" text-anchor="end" fill="#3a3a3a" font-size="7">SHIELD</text>
<text x="105" y="775.4" text-anchor="end" fill="#3a3a3a" font-size="7">LIN LEFT</text>
<polyline points="113.0,692.0 336.0,692.0 336.0,779.0" fill="none" stroke="#4cae4c" stroke-width="2"/>
<polyline points="113.5,692.5 336.5,692.5 336.5,779.5" fill="none" stroke="#c8c8f4" stroke-width="1"/>
<line x1="113.0" y1="703.0" x2="225.0" y2="703.0" stroke="#9a9a9a" stroke-width="1.6"/>
<circle cx="230" cy="703.1" r="2.5" fill="#111"/>
<line x1="232.5" y1="698.5" x2="232.5" y2="707.5" stroke="#333" stroke-width="1"/>
<line x1="234.5" y1="700.5" x2="234.5" y2="706.5" stroke="#444" stroke-width="1"/>
<line x1="236.5" y1="702.5" x2="236.5" y2="704.5" stroke="#333" stroke-width="1"/>
<text x="242" y="707.6" fill="#3a3a3a" font-size="7">G200</text>
<text x="249" y="652.2" text-anchor="middle" fill="#3a3a3a" font-size="7">(UNDER LEFT</text>
<text x="249" y="660.6" text-anchor="middle" fill="#3a3a3a" font-size="7">FRONT OF CENTER</text>
<text x="249" y="669.0" text-anchor="middle" fill="#3a3a3a" font-size="7">CONSOLE)</text>
<line x1="249.5" y1="674.5" x2="249.5" y2="698.5" stroke="#333" stroke-width="1"/>
<path d="M246.9,697 L249.4,701 L251.9,697 Z" fill="#111"/>
<polyline points="113.0,714.0 289.0,714.0" fill="none" stroke="#c0b080" stroke-width="2"/>
<polyline points="113.5,714.5 289.5,714.5" fill="none" stroke="#e0dcd0" stroke-width="1"/>
<line x1="113.5" y1="738.5" x2="218.5" y2="738.5" stroke="#d6d6d6" stroke-width="1.4"/>
<path d="M218.5,734 L225.5,738 L218.5,742 Z" fill="#111"/>
<text x="226.1" y="737.2" fill="#3a3a3a" font-size="7">COMPUTER DATA</text>
<text x="226.1" y="746.0" fill="#3a3a3a" font-size="7">LINES SYSTEM</text>
<polyline points="113.0,751.0 347.0,751.0 347.0,779.0" fill="none" stroke="#80c870" stroke-width="2"/>
<polyline points="113.5,751.5 347.5,751.5 347.5,779.5" fill="none" stroke="#d4d4d4" stroke-width="1"/>
<polyline points="113.0,762.0 406.0,762.0 406.0,779.0" fill="none" stroke="#151515" stroke-width="2"/>
<polyline points="113.0,773.0 371.0,773.0 371.0,779.0" fill="none" stroke="#ffff00" stroke-width="2"/>
<text x="138.3" y="688.1" fill="#3a3a3a" font-size="7">GRN/BLU</text>
<text x="184.8" y="688.1" fill="#3a3a3a" font-size="7">RLF15</text>
<text x="138.3" y="699.6" fill="#3a3a3a" font-size="7">BLK/WHT</text>
<text x="184.8" y="699.6" fill="#3a3a3a" font-size="7">GD374</text>
<text x="138.3" y="711.5" fill="#3a3a3a" font-size="7">WHT/BRN</text>
<text x="184.8" y="711.5" fill="#3a3a3a" font-size="7">VLF16</text>
<text x="138.3" y="734.7" fill="#3a3a3a" font-size="7">WHT</text>
<text x="184.8" y="734.7" fill="#3a3a3a" font-size="7">VDB05</text>
<text x="138.3" y="747.2" fill="#3a3a3a" font-size="7">WHT/GRN</text>
<text x="184.8" y="747.2" fill="#3a3a3a" font-size="7">LLF15</text>
<text x="138.3" y="758.9000000000001" fill="#3a3a3a" font-size="7">NCA</text>
<text x="184.8" y="758.9000000000001" fill="#3a3a3a" font-size="7">DLF32</text>
<text x="138.3" y="770.1" fill="#3a3a3a" font-size="7">YEL</text>
<text x="184.8" y="770.1" fill="#3a3a3a" font-size="7">VLF32</text>
<circle cx="359.1" cy="714.9" r="5.2" fill="#fff"/>
<circle cx="359.1" cy="714.9" r="2.5" fill="#111"/>
<polyline points="364.0,715.0 863.0,715.0" fill="none" stroke="#ffff00" stroke-width="2"/>
<polyline points="364.5,715.5 863.5,715.5" fill="none" stroke="#ff99ff" stroke-width="1"/>
<text x="362.3" y="711.2" fill="#3a3a3a" font-size="7">S133</text>
<text x="406" y="711.2" fill="#3a3a3a" font-size="7">YEL/VIO</text>
<text x="830.6" y="711.7" fill="#3a3a3a" font-size="7">YEL/VIO</text>
<text x="869.5" y="717.5" fill="#3a3a3a" font-size="6.3">2</text>
<text x="362.3" y="648.2" fill="#3a3a3a" font-size="7">(DASH PANEL</text>
<text x="362.3" y="657.1" fill="#3a3a3a" font-size="7">TO HEADLAMP</text>
<text x="362.3" y="666.0" fill="#3a3a3a" font-size="7">JUNCTION WIRING</text>
<text x="362.3" y="674.9000000000001" fill="#3a3a3a" font-size="7">ASSEMBLY, NEAR</text>
<text x="362.3" y="683.8000000000001" fill="#3a3a3a" font-size="7">BREAKOUT TO</text>
<text x="362.3" y="692.7" fill="#3a3a3a" font-size="7">BATTERY JUNCTION</text>
<text x="362.3" y="701.6" fill="#3a3a3a" font-size="7">BOX (BJB))</text>
<text transform="translate(356.7,648) rotate(-90)" text-anchor="middle" fill="#3a3a3a" font-size="7">YEL/VIO</text>
<text transform="translate(356.7,741.8) rotate(-90)" text-anchor="middle" fill="#3a3a3a" font-size="7">YEL/VIO</text>
<line x1="581.5" y1="685.5" x2="581.5" y2="779.5" stroke="#111" stroke-width="1.2" stroke-dasharray="5,4"/>
<circle cx="581.5" cy="679.6" r="5.2" fill="#fff"/>
<circle cx="581.5" cy="679.6" r="2.5" fill="#111"/>
<polyline points="587.0,680.0 863.0,680.0" fill="none" stroke="#ffff00" stroke-width="2"/>
<polyline points="587.5,680.5 863.5,680.5" fill="none" stroke="#a8a8ff" stroke-width="1"/>
<text x="577.1" y="682" text-anchor="end" fill="#3a3a3a" font-size="7">S109</text>
<text x="594.6" y="675.7" fill="#3a3a3a" font-size="7">YEL/BLU</text>
<text x="828.8" y="675.7" fill="#3a3a3a" font-size="7">YEL/BLU</text>
<text x="869.5" y="682.3" fill="#3a3a3a" font-size="6.3">1</text>
<polyline points="418.0,779.0 418.0,773.0 670.0,773.0" fill="none" stroke="#1a1aff" stroke-width="2"/>
<line x1="674.0" y1="773.0" x2="863.0" y2="773.0" stroke="#1a1aff" stroke-width="2"/>
<path d="M669.5,768.8 Q673,773.4 669.5,778 M673.3,768.8 Q676.8,773.4 673.3,778" fill="none" stroke="#333" stroke-width="1"/>
<text x="649.5" y="771" fill="#3a3a3a" font-size="7">BLU</text>
<text x="677.3" y="771" fill="#3a3a3a" font-size="7">26</text>
<text x="700.4" y="771" fill="#3a3a3a" font-size="7">BLU</text>
<text x="841.4" y="771" fill="#3a3a3a" font-size="7">BLU</text>
<text x="869.5" y="776" fill="#3a3a3a" font-size="6.3">3</text>
<path d="M601.4,779 L601.4,765 Q601.4,761.7 604.9,761.7 Q608.4,761.7 608.4,765 L608.4,779" fill="none" stroke="#aaa" stroke-width="1" stroke-dasharray="4,3"/>
<path d="M624.9,779 L624.9,765 Q624.9,761.7 628.4,761.7 Q631.9,761.7 631.9,765 L631.9,779" fill="none" stroke="#aaa" stroke-width="1" stroke-dasharray="4,3"/>
<line x1="605.5" y1="761.5" x2="628.5" y2="761.5" stroke="#222" stroke-width="1.3" stroke-dasharray="5,3.5"/>
<path d="M730,779 L730,765 Q730,761.7 733.5,761.7 Q737,761.7 737,765 L737,779" fill="none" stroke="#aaa" stroke-width="1" stroke-dasharray="4,3"/>
<path d="M753.5,779 L753.5,765 Q753.5,761.7 757.0,761.7 Q760.5,761.7 760.5,765 L760.5,779" fill="none" stroke="#aaa" stroke-width="1" stroke-dasharray="4,3"/>
<line x1="734.5" y1="761.5" x2="757.5" y2="761.5" stroke="#222" stroke-width="1.3" stroke-dasharray="5,3.5"/>
<path d="M800.6,779 L800.6,765 Q800.6,761.7 804.1,761.7 Q807.6,761.7 807.6,765 L807.6,779" fill="none" stroke="#aaa" stroke-width="1" stroke-dasharray="4,3"/>
<path d="M824.1,779 L824.1,765 Q824.1,761.7 827.6,761.7 Q831.1,761.7 831.1,765 L831.1,779" fill="none" stroke="#aaa" stroke-width="1" stroke-dasharray="4,3"/>
<line x1="804.5" y1="761.5" x2="827.5" y2="761.5" stroke="#222" stroke-width="1.3" stroke-dasharray="5,3.5"/>
<circle cx="675.5" cy="597.5" r="2.5" fill="#111"/>
<line x1="680.5" y1="597.5" x2="740.5" y2="597.5" stroke="#333" stroke-width="1.4" stroke-dasharray="6.5,4.5"/>
<circle cx="745.6" cy="597.5" r="2.5" fill="#111"/>
<polyline points="751.0,598.0 828.0,598.0" fill="none" stroke="#555555" stroke-width="2"/>
<polyline points="751.5,598.5 828.5,598.5" fill="none" stroke="#99dd88" stroke-width="1"/>
<line x1="673.5" y1="593.5" x2="673.5" y2="602.5" stroke="#aaa" stroke-width="1"/>
<line x1="671.5" y1="594.5" x2="671.5" y2="600.5" stroke="#999" stroke-width="0.8"/>
<circle cx="669.1" cy="597.5" r="0.6" fill="#555"/>
<text x="667" y="600.7" text-anchor="end" fill="#3a3a3a" font-size="7">G103</text>
<text x="665.5" y="609.6" text-anchor="end" fill="#3a3a3a" font-size="7">(LEFT FRONT</text>
<text x="665.5" y="618.2" text-anchor="end" fill="#3a3a3a" font-size="7">CORNER OF</text>
<text x="667.5" y="626.8" text-anchor="end" fill="#3a3a3a" font-size="7">ENGINE COMPT)</text>
<text x="698.9" y="594" fill="#3a3a3a" font-size="7">BLK/GRN</text>
<text x="780.5" y="594" fill="#3a3a3a" font-size="7">BLK/GRN</text>
<text x="822.1" y="594" fill="#3a3a3a" font-size="7">A</text>
<text x="737.8" y="609" fill="#3a3a3a" font-size="7">S159</text>
<text x="796.1" y="629.3" fill="#3a3a3a" font-size="7">BRN</text>
<text x="822.1" y="629.3" fill="#3a3a3a" font-size="7">B</text>
<rect x="831.5" y="590.5" width="37.0" height="48.0" fill="#f4f4fd" stroke="#666" stroke-width="1.3"/>
<path d="M829.5,593.1 Q825.5,597.6 829.5,602.1" fill="none" stroke="#444" stroke-width="1"/>
<path d="M829.5,627.7 Q825.5,632.2 829.5,636.7" fill="none" stroke="#444" stroke-width="1"/>
<polyline points="831.5,597.5 851.5,597.5 851.5,606.5" fill="none" stroke="#444" stroke-width="1"/>
<polyline points="851.5,624.5 851.5,632.5 831.5,632.5" fill="none" stroke="#444" stroke-width="1"/>
<path d="M834.5,594.1 L831.5,597.6 L834.5,601.1 M834.5,628.7 L831.5,632.2 L834.5,635.7" fill="none" stroke="#444" stroke-width="1"/>
<circle cx="851.2" cy="615.1" r="10.9" fill="none" stroke="#444" stroke-width="1"/>
<path d="M851.5,606 Q847.5,608.5 847.5,615.1 Q847.5,621.5 851.5,624" fill="none" stroke="#444" stroke-width="1"/>
<ellipse cx="851.5" cy="615.2" rx="2.5" ry="1.2" fill="none" stroke="#444" stroke-width="1"/>
<text x="866" y="645.8" text-anchor="end" fill="#6a80c8" font-size="7">LEFT FRONT</text>
<text x="868.5" y="654.6" text-anchor="end" fill="#6a80c8" font-size="7">FOG LAMP</text>
<path d="M31,779 L31,82 L880.5,82 L880.5,779" fill="none" stroke="#222" stroke-width="2"/>
<rect x="0" y="779" width="943" height="29" fill="#ffffff"/>
<rect x="0" y="0" width="943" height="50" fill="#d3d3d3"/>
<text x="205.61" y="27.8" fill="#404040" font-size="18.4" textLength="26.94" lengthAdjust="spacingAndGlyphs">Fig</text>
<text x="238.47" y="27.8" fill="#404040" font-size="18.4" textLength="14.51" lengthAdjust="spacingAndGlyphs">1:</text>
<text x="257.34" y="27.8" fill="#404040" font-size="18.4" textLength="89.74" lengthAdjust="spacingAndGlyphs">Headlights</text>
<text x="352.46" y="27.8" fill="#404040" font-size="18.4" textLength="57.29" lengthAdjust="spacingAndGlyphs">Circuit,</text>
<text x="415.01" y="27.8" fill="#404040" font-size="18.4" textLength="25.49" lengthAdjust="spacingAndGlyphs">W/</text>
<text x="446.56" y="27.8" fill="#404040" font-size="18.4" textLength="73.24" lengthAdjust="spacingAndGlyphs">Dynamic</text>
<text x="527.66" y="27.8" fill="#404040" font-size="18.4" textLength="70.05" lengthAdjust="spacingAndGlyphs">Leveling</text>
<text x="602.96" y="27.8" fill="#404040" font-size="18.4" textLength="14.97" lengthAdjust="spacingAndGlyphs">(1</text>
<text x="626.12" y="27.8" fill="#404040" font-size="18.4" textLength="15.56" lengthAdjust="spacingAndGlyphs">of</text>
<text x="647.46" y="27.8" fill="#404040" font-size="18.4" textLength="18.43" lengthAdjust="spacingAndGlyphs">2)</text>
</svg>
</body></html>
